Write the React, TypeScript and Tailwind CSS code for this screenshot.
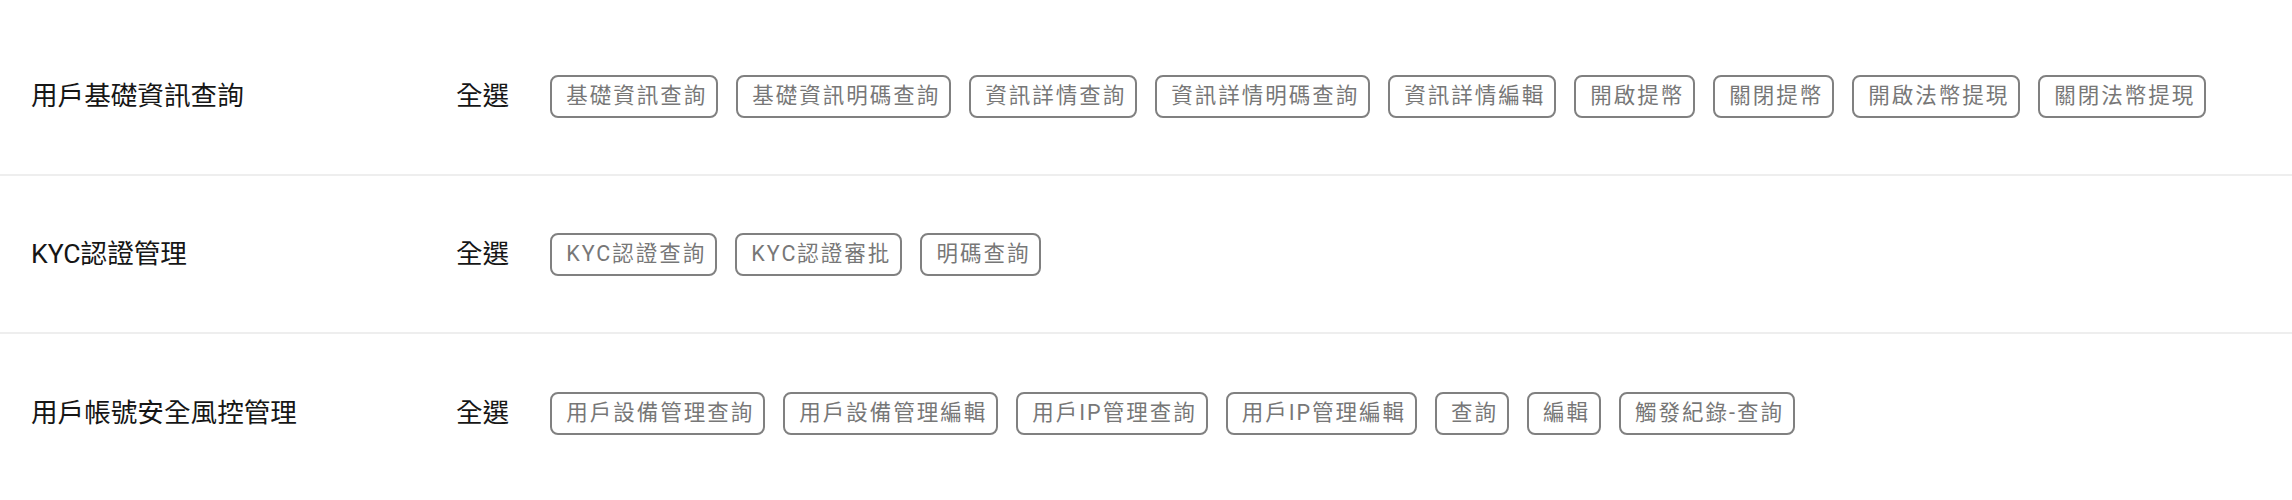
import React from "react";

type Group = {
  title: string;
  perms: string[];
};

const groups: Group[] = [
  {
    title: "用戶基礎資訊查詢",
    perms: [
      "基礎資訊查詢",
      "基礎資訊明碼查詢",
      "資訊詳情查詢",
      "資訊詳情明碼查詢",
      "資訊詳情編輯",
      "開啟提幣",
      "關閉提幣",
      "開啟法幣提現",
      "關閉法幣提現",
    ],
  },
  {
    title: "KYC認證管理",
    perms: ["KYC認證查詢", "KYC認證審批", "明碼查詢"],
  },
  {
    title: "用戶帳號安全風控管理",
    perms: [
      "用戶設備管理查詢",
      "用戶設備管理編輯",
      "用戶IP管理查詢",
      "用戶IP管理編輯",
      "查詢",
      "編輯",
      "觸發紀錄-查詢",
    ],
  },
];

function PermTag({ label }: { label: string }) {
  return (
    <span className="h-[43px] flex items-center border-2 border-[#808080] rounded-[8px] pl-[14px] pr-[9px] text-[21.5px] leading-[28px] tracking-[2px] text-[#777777] whitespace-nowrap">
      {label}
    </span>
  );
}

function PermRow({ group, last }: { group: Group; last: boolean }) {
  return (
    <div
      className={
        "h-[158px] flex items-center px-[31px] " +
        (last ? "" : "border-b-2 border-[#eeeeee]")
      }
    >
      <div className="w-[425px] shrink-0 text-[26.6px] leading-[36px] text-[#161616]">
        {group.title}
      </div>
      <div className="shrink-0 text-[26.6px] leading-[36px] text-[#161616] mr-[41px]">
        全選
      </div>
      <div className="flex flex-wrap gap-x-[18px] gap-y-3">
        {group.perms.map((p) => (
          <PermTag key={p} label={p} />
        ))}
      </div>
    </div>
  );
}

export default function App() {
  return (
    <div
      className="w-full min-h-[500px] bg-white pt-[18px]"
      style={{ fontFamily: 'Roboto, "Noto Sans CJK TC", sans-serif' }}
    >
      {groups.map((g, i) => (
        <PermRow key={g.title} group={g} last={i === groups.length - 1} />
      ))}
    </div>
  );
}
